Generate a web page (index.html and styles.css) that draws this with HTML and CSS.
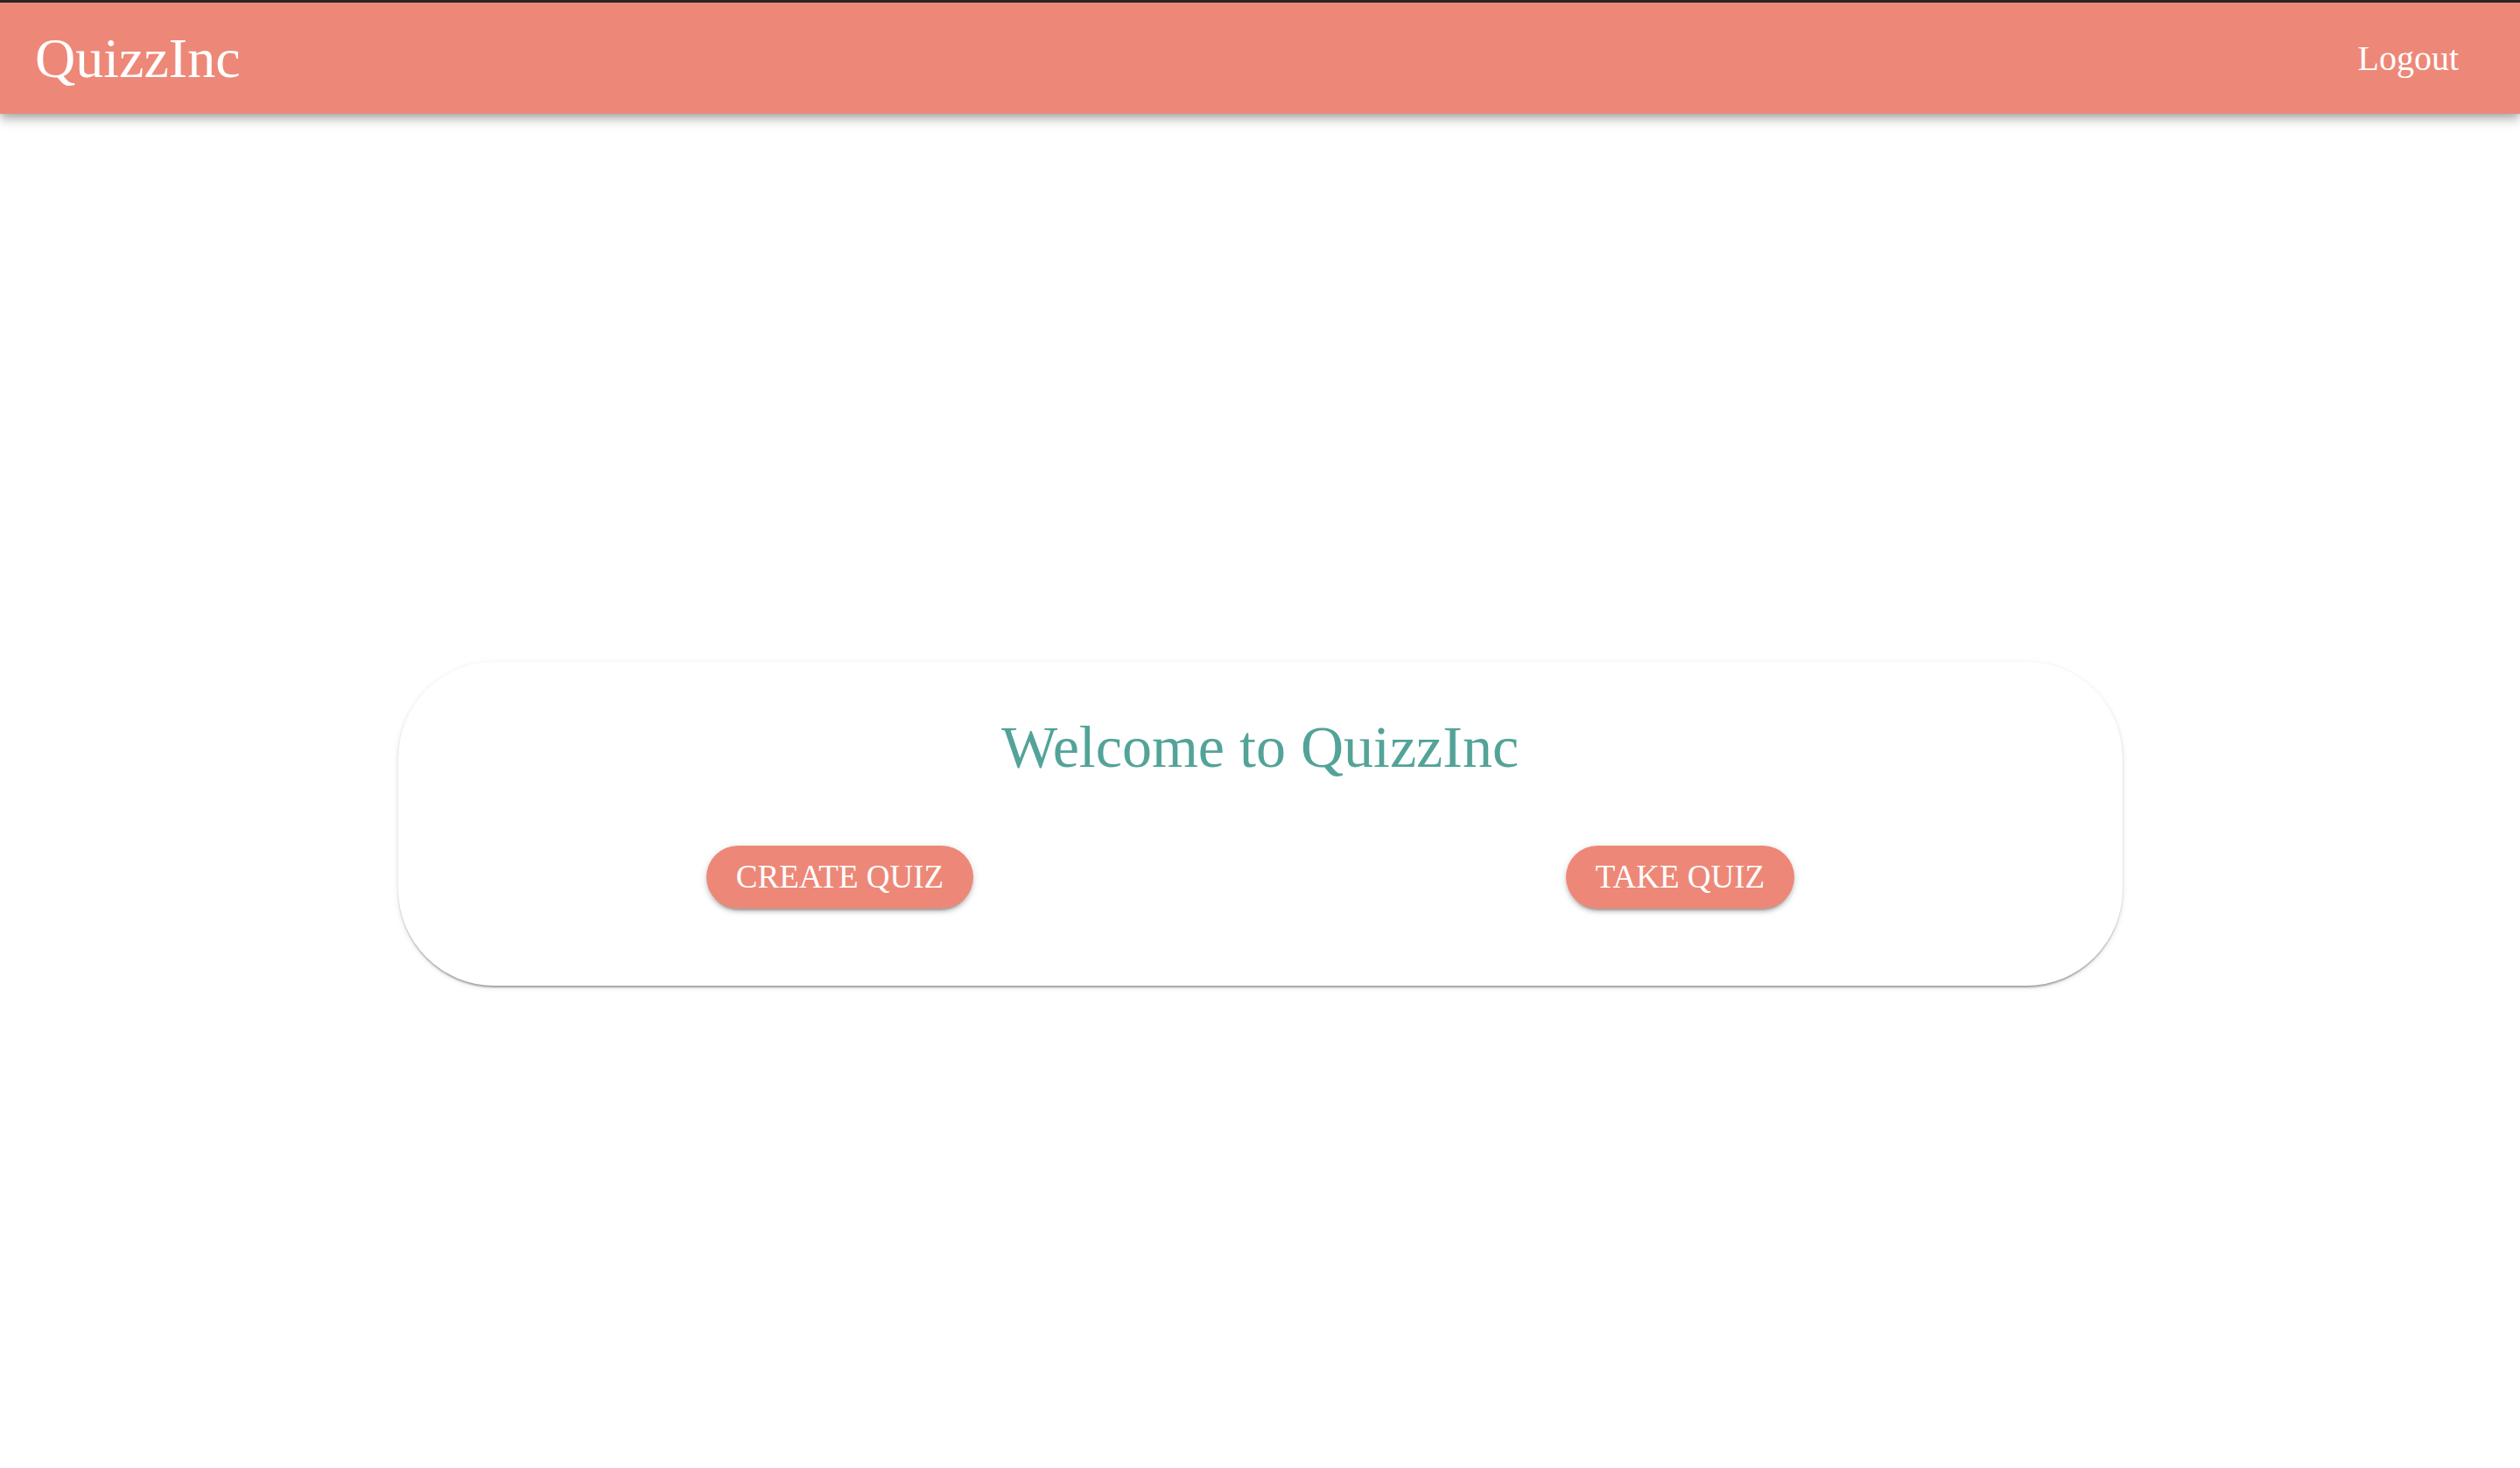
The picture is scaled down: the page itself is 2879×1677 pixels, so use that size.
FILE: index.html
```html
<!DOCTYPE html>
<html lang="en">
<head>
<meta charset="utf-8">
<title>QuizzInc</title>
<link rel="stylesheet" href="styles.css">
</head>
<body>
<header class="appbar">
  <div class="logo">QuizzInc</div>
  <a class="logout" href="#">Logout</a>
</header>
<main class="main">
  <section class="card">
    <h1 class="title">Welcome to QuizzInc</h1>
    <div class="actions">
      <div class="action"><button class="btn">CREATE QUIZ</button></div>
      <div class="action"><button class="btn">TAKE QUIZ</button></div>
    </div>
  </section>
</main>
</body>
</html>
```
FILE: styles.css
```css
html, body {
  margin: 0;
  padding: 0;
  background: #ffffff;
}
body {
  font-family: "Liberation Serif", "Times New Roman", serif;
  min-height: 1677px;
}
.appbar {
  position: relative;
  z-index: 2;
  box-sizing: border-box;
  height: 130px;
  border-top: 3px solid #262626;
  background: #ed8878;
  display: flex;
  align-items: center;
  justify-content: space-between;
  padding: 0 70px 0 40px;
  box-shadow: 0 4px 8px -2px rgba(0,0,0,0.2), 0 8px 10px 0 rgba(0,0,0,0.14), 0 2px 20px 0 rgba(0,0,0,0.12);
}
.logo {
  color: #ffffff;
  font-size: 64px;
  line-height: normal;
}
.logout {
  color: #ffffff;
  font-size: 40px;
  text-decoration: none;
}
.main {
  padding-top: 626px;
}
.card {
  box-sizing: border-box;
  width: 1970px;
  height: 370px;
  margin: 0 auto;
  background: #ffffff;
  border-radius: 110px;
  padding: 60px 25px 0;
  box-shadow: 0 4px 2px -2px rgba(0,0,0,0.2), 0 2px 2px 0 rgba(0,0,0,0.14), 0 2px 6px 0 rgba(0,0,0,0.12);
}
.title {
  margin: 0;
  text-align: center;
  color: #53a398;
  font-weight: normal;
  font-size: 68px;
  line-height: 74px;
}
.actions {
  display: grid;
  grid-template-columns: 1fr 1fr;
  margin-top: 76px;
}
.action {
  display: flex;
  justify-content: center;
}
.btn {
  font-family: "Liberation Serif", "Times New Roman", serif;
  font-size: 37px;
  line-height: 72px;
  height: 72px;
  padding: 0 34px;
  border: none;
  border-radius: 36px;
  background: #ed8878;
  color: #ffffff;
  cursor: pointer;
  box-shadow: 0 6px 2px -4px rgba(0,0,0,0.2), 0 4px 4px 0 rgba(0,0,0,0.14), 0 2px 10px 0 rgba(0,0,0,0.12);
}
```
